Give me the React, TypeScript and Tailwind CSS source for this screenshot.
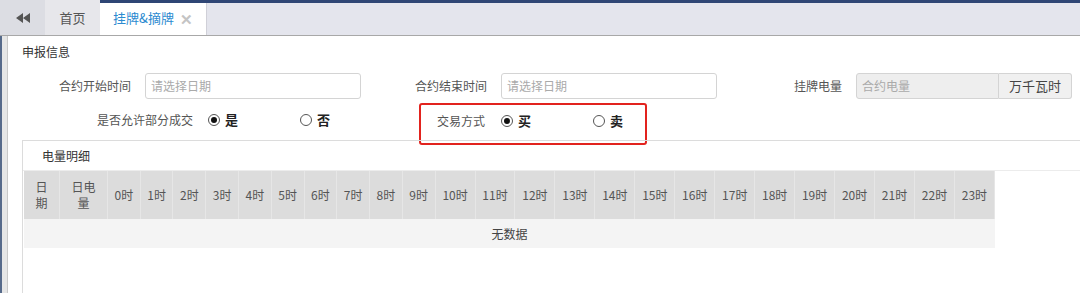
const hours = Array.from({ length: 24 }, (_, i) => i);

function Radio({ checked, label }: { checked?: boolean; label: string }) {
  return (
    <span className="flex items-center gap-[5px]">
      <span className="flex h-[12px] w-[12px] items-center justify-center rounded-full border border-[#555] bg-white">
        {checked && <span className="h-[6px] w-[6px] rounded-full bg-[#111]" />}
      </span>
      <span className="text-[13px] font-bold text-[#222]">{label}</span>
    </span>
  );
}

function Field({ label, labelW, placeholder }: { label: string; labelW: string; placeholder: string }) {
  return (
    <div className="flex items-center">
      <span className={`${labelW} text-right text-[12px] text-[#555]`}>{label}</span>
      <div className="ml-[14px] flex h-[26px] w-[216px] items-center rounded-[3px] border border-[#d4d4d4] bg-white px-[5px] text-[12px] text-[#aaa]">
        {placeholder}
      </div>
    </div>
  );
}

export default function App() {
  return (
    <div
      className="h-[293px] w-[1080px] overflow-hidden bg-white"
      style={{ fontFamily: '"Noto Sans CJK SC", "Liberation Sans", sans-serif' }}
    >
      {/* tab bar */}
      <div className="flex h-[36px] border-b border-[#a8a8a8] bg-[#e4e5ed]">
        <div className="flex w-[45px] items-center justify-center bg-[#dcdde3]">
          <svg width="14" height="10" viewBox="0 0 14 10">
            <path d="M7 0 L0 5 L7 10 Z M14 0 L7 5 L14 10 Z" fill="#555" />
          </svg>
        </div>
        <div className="flex w-[55px] items-center justify-center bg-[#e7e7eb] text-[13px] text-[#555]">首页</div>
        <div className="flex flex-1 flex-col">
          <div className="h-[3px] bg-[#2f4675]" />
          <div className="flex flex-1">
            <div className="flex w-[107px] items-center justify-center gap-[6px] border-r border-[#d0d0d8] bg-white pb-[2px] text-[13px] text-[#2b8ad0]">
              挂牌&amp;摘牌
              <span className="text-[15px] font-bold leading-none text-[#c4c4c4]">✕</span>
            </div>
          </div>
        </div>
      </div>

      <div className="flex h-[257px]">
        <div className="w-[7px] border-l-2 border-[#566a8a] bg-[#e6e6e6]" />
        <div className="flex flex-1 flex-col border-l border-[#c8c8c8] bg-white">
          <div className="h-[35px] pl-[14px] pt-[7px] text-[12px] text-[#333]">申报信息</div>

          <div className="flex h-[30px] items-center">
            <Field label="合约开始时间" labelW="w-[123px]" placeholder="请选择日期" />
            <Field label="合约结束时间" labelW="w-[126px]" placeholder="请选择日期" />
            <div className="flex items-center">
              <span className="w-[125px] text-right text-[12px] text-[#555]">挂牌电量</span>
              <div className="ml-[14px] flex h-[26px] w-[143px] items-center rounded-l-[3px] border border-[#d4d4d4] bg-[#eeeeee] px-[5px] text-[12px] text-[#aaa]">
                合约电量
              </div>
              <div className="flex h-[26px] w-[73px] items-center justify-center rounded-r-[3px] border border-l-0 border-[#d4d4d4] bg-[#f0f0f0] text-[13px] text-[#444]">
                万千瓦时
              </div>
            </div>
          </div>

          <div className="flex h-[38px] items-center">
            <span className="w-[185px] text-right text-[12px] text-[#555]">是否允许部分成交</span>
            <div className="ml-[15px] w-[92px]">
              <Radio checked label="是" />
            </div>
            <Radio label="否" />
            <div className="ml-[89px] flex h-[42px] w-[228px] items-center self-start mt-[2px] rounded-[3px] border-2 border-[#e2231e] pb-[6px] pl-[16px]">
              <span className="w-[64px] text-[12px] text-[#555]">交易方式</span>
              <div className="w-[92px]">
                <Radio checked label="买" />
              </div>
              <Radio label="卖" />
            </div>
          </div>

          {/* 电量明细 */}
          <div className="ml-[14px] mt-[1px] flex flex-1 flex-col border-l border-t border-[#dcdcdc]">
            <div className="h-[30px] border-b border-[#ececec] pl-[19px] pt-[6px] text-[12px] text-[#333]">电量明细</div>
            <div className="ml-[1px] w-[971px]">
              <div className="flex h-[48px] bg-[#dcdcdc] text-[12px] leading-[16px] text-[#555]">
                <div className="flex w-[36px] items-center justify-center border-r border-[#e6e6e6] text-center">
                  日<br />期
                </div>
                <div className="flex w-[48px] items-center justify-center border-r border-[#e6e6e6] text-center">
                  日电
                  <br />量
                </div>
                {hours.map((h) => (
                  <div
                    key={h}
                    className={`flex items-center justify-center border-r border-[#e6e6e6] ${h < 10 ? "w-[32.8px]" : "w-[40px]"}`}
                  >
                    {h}时
                  </div>
                ))}
              </div>
              <div className="flex h-[29px] items-center justify-center bg-[#f4f4f4] text-[12px] text-[#444]">无数据</div>
            </div>
          </div>
        </div>
      </div>
    </div>
  );
}
